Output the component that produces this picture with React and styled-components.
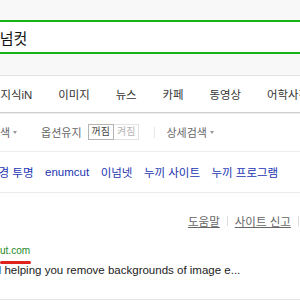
import React from 'react';
import styled, { createGlobalStyle } from 'styled-components';

const GlobalStyle = createGlobalStyle`
  html, body {
    margin: 0;
    padding: 0;
    background: #fff;
  }
  body {
    width: 300px;
    height: 300px;
    overflow: hidden;
    font-family: "Liberation Sans", "Noto Sans CJK KR", sans-serif;
  }
`;

const Page = styled.div`
  width: 300px;
  height: 300px;
  overflow: hidden;
  display: flex;
  flex-direction: column;
  white-space: nowrap;
`;

const Header = styled.header`
  background: #f8f8f8;
  padding: 20px 0 21px;
  border-bottom: 1px solid #e3e3e3;
`;

const SearchBox = styled.div`
  height: 30px;
  border-top: 2px solid #14b414;
  border-bottom: 2px solid #14b414;
  background: #fff;
  display: flex;
  align-items: center;
  overflow: hidden;
`;

const Query = styled.span`
  font-family: "Noto Sans CJK KR", sans-serif;
  font-size: 15px;
  color: #111;
  margin-left: -14px;
`;

const TabBar = styled.nav`
  height: 36px;
  display: flex;
  align-items: center;
  gap: 13px;
  margin-left: -57px;
  border-bottom: 1px solid #cfcfcf;
  box-shadow: 0 1px 0 #ececec;
`;

const Tab = styled.a`
  font-size: 11.4px;
  color: #333;
  text-decoration: none;
`;

const TabDivider = styled.span`
  width: 1px;
  height: 11px;
  background: #e2e2e2;
`;

const OptionBar = styled.div`
  height: 38px;
  display: flex;
  align-items: center;
  margin-left: -30.4px;
  border-bottom: 1px solid #ededed;
  font-size: 11px;
  color: #666;
`;

const Dropdown = styled.span`
  display: inline-flex;
  align-items: center;
  gap: 3px;
  margin-right: ${p => p.$gap || 0}px;
  &::after {
    content: '';
    width: 0;
    height: 0;
    border-left: 2.5px solid transparent;
    border-right: 2.5px solid transparent;
    border-top: 3px solid #999;
  }
`;

const OptionLabel = styled.span`
  margin-right: 6px;
`;

const Toggle = styled.span`
  display: inline-flex;
  margin-right: 15px;
`;

const ToggleButton = styled.span`
  height: 14px;
  line-height: 14px;
  padding: 0 3px;
  font-size: 10px;
  border: 1px solid ${p => (p.$on ? '#b4b4b4' : '#e2e2e2')};
  border-left-width: ${p => (p.$on ? 1 : 0)}px;
  color: ${p => (p.$on ? '#444' : '#b5b5b5')};
  background: #fff;
`;

const OptionDivider = styled.span`
  width: 1px;
  height: 11px;
  background: #e6e6e6;
  margin-right: 11px;
`;

const RelatedBar = styled.div`
  height: 40px;
  display: flex;
  align-items: center;
  gap: 11.5px;
  margin-left: -12px;
  border-bottom: 1px solid #ebebeb;
`;

const RelatedLink = styled.a`
  font-size: 11.5px;
  color: #2235b2;
  text-decoration: none;
`;

const Results = styled.section`
  flex: 1;
  display: flex;
  flex-direction: column;
  border-bottom: 1px solid #e6e6e6;
`;

const UtilBar = styled.div`
  display: flex;
  align-items: center;
  gap: 7px;
  padding: 20px 0 0 188px;
  height: 16px;
`;

const UtilLink = styled.a`
  font-size: 11.5px;
  color: #666;
  text-decoration: underline;
`;

const UtilDivider = styled.span`
  width: 1px;
  height: 10px;
  background: #dcdcdc;
`;

const ResultItem = styled.div`
  display: flex;
  flex-direction: column;
  padding-top: 15px;
`;

const Url = styled.a`
  position: relative;
  align-self: flex-start;
  font-size: 10px;
  line-height: 14px;
  color: #23891f;
  text-decoration: none;
  margin-left: -30px;
  &::after {
    content: '';
    position: absolute;
    left: 30px;
    top: 17px;
    width: 31px;
    height: 2.5px;
    border-radius: 2px;
    background: #e0211c;
  }
`;

const Snippet = styled.p`
  margin: 5px 0 0 -18px;
  font-size: 11.5px;
  line-height: 14px;
  color: #222;
`;

export default function App() {
  return (
    <>
      <GlobalStyle />
      <Page>
        <Header>
          <SearchBox>
            <Query>이넘컷</Query>
          </SearchBox>
        </Header>
        <TabBar>
          <Tab>블로그</Tab>
          <TabDivider />
          <Tab>지식iN</Tab>
          <TabDivider />
          <Tab>이미지</Tab>
          <TabDivider />
          <Tab>뉴스</Tab>
          <TabDivider />
          <Tab>카페</Tab>
          <TabDivider />
          <Tab>동영상</Tab>
          <TabDivider />
          <Tab>어학사전</Tab>
        </TabBar>
        <OptionBar>
          <Dropdown $gap={24}>영역검색</Dropdown>
          <OptionLabel>옵션유지</OptionLabel>
          <Toggle>
            <ToggleButton $on>꺼짐</ToggleButton>
            <ToggleButton>켜짐</ToggleButton>
          </Toggle>
          <OptionDivider />
          <Dropdown>상세검색</Dropdown>
        </OptionBar>
        <RelatedBar>
          <RelatedLink>배경 투명</RelatedLink>
          <RelatedLink>enumcut</RelatedLink>
          <RelatedLink>이넘넷</RelatedLink>
          <RelatedLink>누끼 사이트</RelatedLink>
          <RelatedLink>누끼 프로그램</RelatedLink>
        </RelatedBar>
        <Results>
          <UtilBar>
            <UtilLink>도움말</UtilLink>
            <UtilDivider />
            <UtilLink>사이트 신고</UtilLink>
            <UtilDivider />
          </UtilBar>
          <ResultItem>
            <Url>enumcut.com</Url>
            <Snippet>and helping you remove backgrounds of image e...</Snippet>
          </ResultItem>
        </Results>
      </Page>
    </>
  );
}
